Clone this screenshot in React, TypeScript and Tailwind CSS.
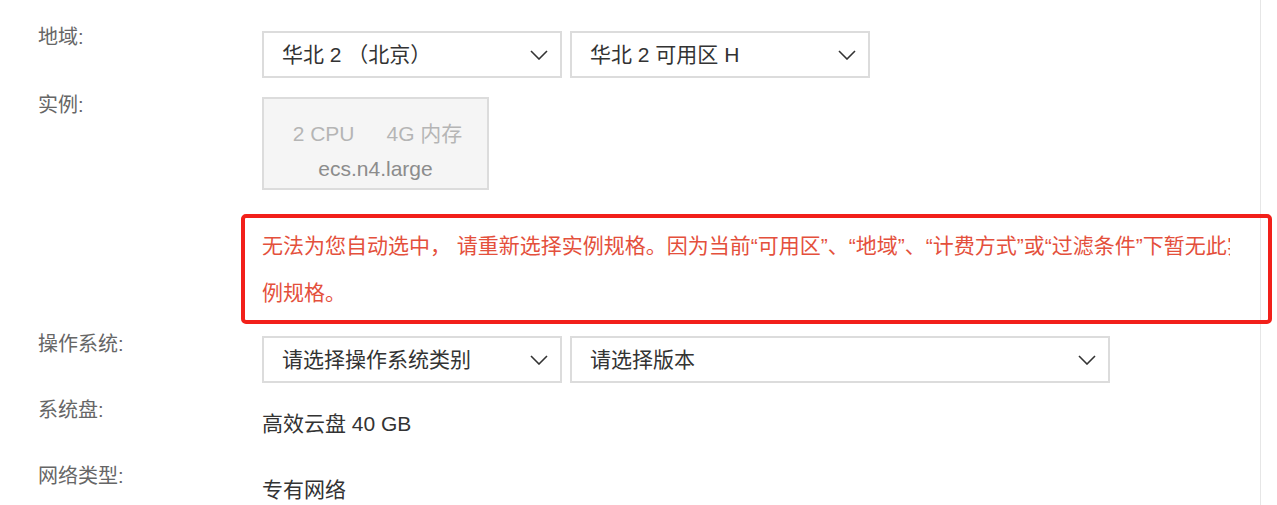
import React from 'react';

const Chevron = () => (
  <svg width="18" height="10" viewBox="0 0 18 10" fill="none" className="shrink-0">
    <polyline points="1,1 9,9 17,1" stroke="#333" strokeWidth="1.6" strokeLinejoin="miter" />
  </svg>
);

const Select = ({ value, width }: { value: string; width: string }) => (
  <div className={`${width} h-[47px] border-2 border-[#dcdcdc] bg-white flex items-center justify-between pl-[18px] pr-[12px]`}>
    <span className="text-[21px] leading-[24px] text-[#333]">{value}</span>
    <Chevron />
  </div>
);

const Label = ({ text }: { text: string }) => (
  <div className="w-[262px] shrink-0 pl-[38px] text-[20px] leading-[20px] text-[#666]">{text}</div>
);

export default function App() {
  return (
    <div className="w-full h-[505px] bg-white overflow-hidden font-['Liberation_Sans','Noto_Sans_CJK_SC',sans-serif]">
      <div className="w-[1261px] h-full border-r border-[#e6e6e6] pt-[27px]">
        {/* 地域 */}
        <div className="flex items-start">
          <Label text="地域:" />
          <div className="mt-[4px] flex gap-[8px]">
            <Select value="华北 2 （北京）" width="w-[300px]" />
            <Select value="华北 2 可用区 H" width="w-[300px]" />
          </div>
        </div>

        {/* 实例 */}
        <div className="flex items-start mt-[17px]">
          <Label text="实例:" />
          <div className="mt-[2px] w-[227px] h-[93px] bg-[#f5f5f5] border-2 border-[#dcdcdc] flex flex-col items-center pt-[22px]">
            <div className="flex gap-[32px] text-[21px] leading-[26px] text-[#b5b5b5] pl-[4px]">
              <span>2 CPU</span>
              <span>4G 内存</span>
            </div>
            <div className="mt-[9px] text-[21px] leading-[26px] text-[#8c8c8c]">ecs.n4.large</div>
          </div>
        </div>

        {/* 提示 */}
        <div className="mt-[24px] ml-[241px] w-[1031px] h-[110px] border-4 border-[#f2201a] rounded-[5px] pl-[17px] pt-[4px]">
          <div className="w-[968px] overflow-hidden text-[21px] leading-[47px] text-[#e4503c]">
            <div className="whitespace-nowrap">
              无法为您自动选中， 请重新选择实例规格。因为当前“可用区”、“地域”、“计费方式”或“过滤条件”下暂无此实
            </div>
            <div>例规格。</div>
          </div>
        </div>

        {/* 操作系统 */}
        <div className="flex items-start mt-[10px]">
          <Label text="操作系统:" />
          <div className="mt-[2px] flex gap-[8px]">
            <Select value="请选择操作系统类别" width="w-[300px]" />
            <Select value="请选择版本" width="w-[540px]" />
          </div>
        </div>

        {/* 系统盘 */}
        <div className="flex items-start mt-[17px]">
          <Label text="系统盘:" />
          <div className="mt-[13px] text-[21px] leading-[22px] text-[#333]">高效云盘 40 GB</div>
        </div>

        {/* 网络类型 */}
        <div className="flex items-start mt-[31px]">
          <Label text="网络类型:" />
          <div className="mt-[13px] text-[21px] leading-[22px] text-[#333]">专有网络</div>
        </div>
      </div>
    </div>
  );
}
